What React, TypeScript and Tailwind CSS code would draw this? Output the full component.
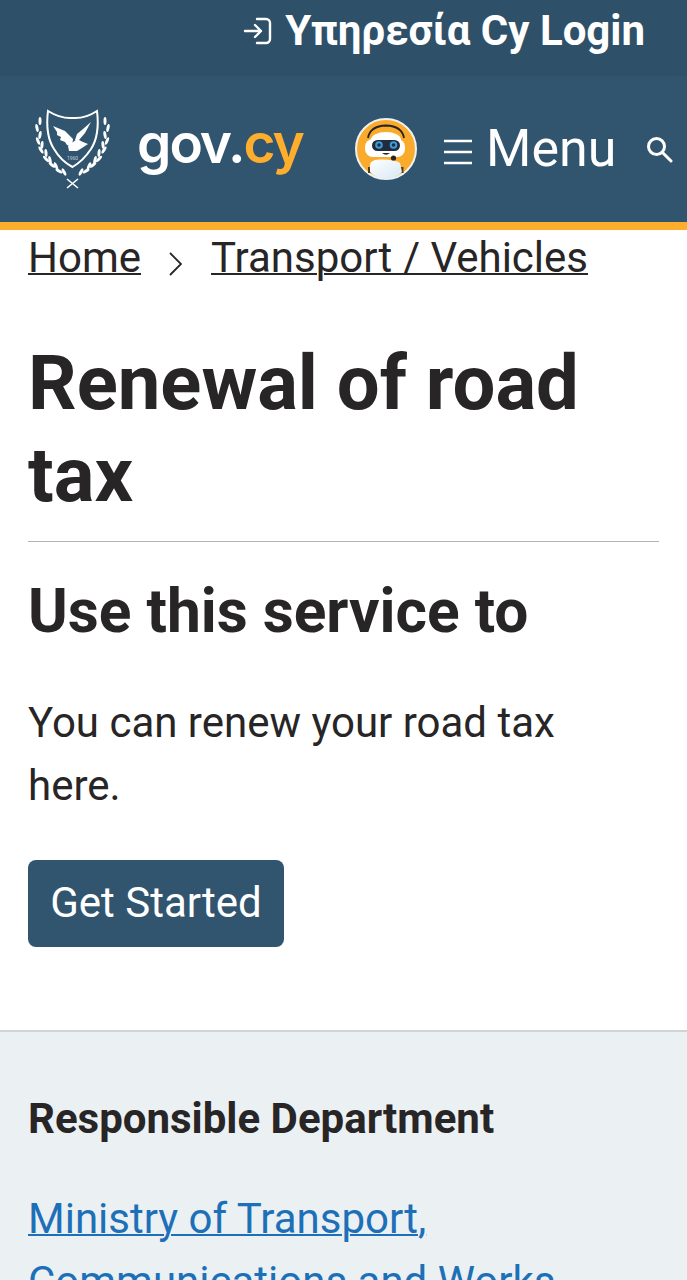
import React from "react";

const leavesLeft = [
  [5, 12, 0],
  [2, 19, -12],
  [5, 26, 10],
  [3, 32, -22],
  [7, 36, 6],
  [6, 41, -32],
  [11, 44, -6],
  [11, 50, -44],
  [15, 51, -14],
  [17, 56, -52],
  [21, 57, -24],
  [24, 62, -58],
  [29, 63, -28],
];

const Crest = () => (
  <svg viewBox="0 0 76 80" className="w-[76px] h-[80px]" fill="none">
    <path d="M13 2 Q26 10 37.5 9 Q50 10 62 2 Q65 26 56 40 Q48 52 37.5 58 Q26 52 19 40 Q10 26 13 2Z" stroke="#fff" strokeWidth="2" />
    <path d="M18 17 L30 22 L38 30 L37 38 L32 36 L30 33 L25 31 L26 28 L22 26 L22 23Z" fill="#fff" />
    <path d="M56 13 L50 24 L44 31 L40 31 L42 25 L48 20Z" fill="#fff" />
    <path d="M33 37 L42 30 L48 33 L53 35 L47 39 L42 42 L34 42Z" fill="#fff" />
    <text x="37.5" y="51" fontSize="5" fill="#c3d0d9" textAnchor="middle" fontFamily="Roboto, sans-serif">1960</text>
    <g fill="#fff">
      {leavesLeft.map(([x, y, r], i) => (
        <g key={i}>
          <ellipse cx={x} cy={y} rx="1.5" ry="4" transform={`rotate(${r} ${x} ${y})`} />
          <ellipse cx={75 - x} cy={y} rx="1.5" ry="4" transform={`rotate(${-r} ${75 - x} ${y})`} />
        </g>
      ))}
    </g>
    <path d="M32 70 L43 79 M43 70 L32 79" stroke="#fff" strokeWidth="1.6" />
  </svg>
);

const Bot = () => (
  <svg viewBox="0 0 62 62" className="w-[62px] h-[62px]">
    <defs>
      <linearGradient id="botBody" x1="0" y1="0" x2="1" y2="1">
        <stop offset="0" stopColor="#ffffff" />
        <stop offset="1" stopColor="#d6e8f5" />
      </linearGradient>
    </defs>
    <circle cx="31" cy="31" r="30" fill="#fbab2c" stroke="#eef2f5" strokeWidth="2" />
    <path d="M13 20 Q15 8 31 7.5 Q47 8 49 20" fill="none" stroke="#2a2320" strokeWidth="1.8" />
    <ellipse cx="31" cy="22" rx="15" ry="8" fill="#fff" />
    <rect x="10" y="21" width="40" height="18" rx="8" fill="#fff" />
    <rect x="17" y="22" width="28" height="11" rx="5.5" fill="#1f2c3d" />
    <circle cx="24" cy="27" r="3.8" fill="#3f9bd8" />
    <circle cx="38.5" cy="27" r="3.8" fill="#3f9bd8" />
    <circle cx="24" cy="27" r="1.8" fill="#1f2c3d" />
    <circle cx="38.5" cy="27" r="1.8" fill="#1f2c3d" />
    <path d="M27 35 Q31 38.5 35 35Z" fill="#2a2320" />
    <rect x="13" y="49" width="3.5" height="6" fill="#5a3a1c" />
    <rect x="45" y="49" width="3.5" height="6" fill="#5a3a1c" />
    <path d="M15 47 Q15 42 24 41.5 Q40 41 45 45 L47 54 Q40 61 31 61 Q22 61 15 54Z" fill="url(#botBody)" />
    <circle cx="38.5" cy="40" r="2.6" fill="#2a2320" />
  </svg>
);

export default function App() {
  return (
    <div className="h-[1280px] overflow-hidden flex flex-col bg-white text-[#272525] font-['Roboto',sans-serif]">
      <header>
        <div className="h-[76px] bg-[#2e5169] flex items-center justify-end pr-[42px] pb-[14px] text-white">
          <svg viewBox="0 0 30 30" className="w-[30px] h-[30px] mr-[12px]" fill="none" stroke="#fff" strokeWidth="2.4" strokeLinecap="round" strokeLinejoin="round">
            <path d="M2 15h16M12 9l6 6-6 6" />
            <path d="M14 3h9a4 4 0 0 1 4 4v16a4 4 0 0 1-4 4h-9" />
          </svg>
          <span className="text-[42px] leading-none font-bold">Υπηρεσία Cy Login</span>
        </div>
        <div className="h-[146px] bg-[#31556f] flex items-center pl-[35px] text-white">
          <Crest />
          <span className="ml-[26px] mb-[12px] w-[166px] text-[55px] font-semibold leading-none font-['Inter',sans-serif] tracking-[-2px] whitespace-nowrap">
            gov.<span className="text-[#ffad2d]">cy</span>
          </span>
          <div className="ml-[52px]"><Bot /></div>
          <svg viewBox="0 0 30 26" className="ml-[26px] mt-[6px] w-[30px] h-[26px]" stroke="#fff" strokeWidth="2.6">
            <path d="M1 2h28M1 13h28M1 24h28" />
          </svg>
          <span className="ml-[13px] text-[52px] leading-none">Menu</span>
          <svg viewBox="0 0 28 28" className="ml-[29px] w-[28px] h-[28px]" fill="none" stroke="#fff" strokeWidth="3" strokeLinecap="round">
            <circle cx="11.5" cy="11.5" r="8" />
            <path d="M17.5 17.5L26 26" />
          </svg>
        </div>
        <div className="h-[8px] bg-[#ffad2d]" />
      </header>
      <main className="px-[28px]">
        <nav className="flex items-center text-[42px] leading-[56px]">
          <a className="underline decoration-2">Home</a>
          <svg viewBox="0 0 14 24" className="ml-[27px] mr-[29px] mt-[12px] w-[14px] h-[24px]" fill="none" stroke="#272525" strokeWidth="1.8">
            <path d="M2 1l11 11-11 11" />
          </svg>
          <a className="underline decoration-2">Transport / Vehicles</a>
        </nav>
        <h1 className="mt-[51px] text-[76px] leading-[92px] font-bold">Renewal of road tax</h1>
        <hr className="mt-[20px] border-[#b1b4b6]" />
        <h2 className="mt-[28px] text-[60.4px] leading-[84px] font-bold">Use this service to</h2>
        <p className="mt-[37px] pr-[100px] text-[42px] leading-[63px]">You can renew your road tax here.</p>
        <button className="mt-[43px] h-[87px] w-[256px] pb-[2px] rounded-[8px] bg-[#31556f] text-white text-[42px]">Get Started</button>
      </main>
      <section className="flex-1 mt-[83px] bg-[#ebf0f3] border-t-2 border-[#cfd4d7] px-[28px] pt-[59px]">
        <h3 className="text-[42px] leading-[56px] font-bold">Responsible Department</h3>
        <a className="block mt-[40px] text-[42px] leading-[63px] text-[#1d70b8] underline decoration-2">Ministry of Transport, Communications and Works</a>
      </section>
    </div>
  );
}
